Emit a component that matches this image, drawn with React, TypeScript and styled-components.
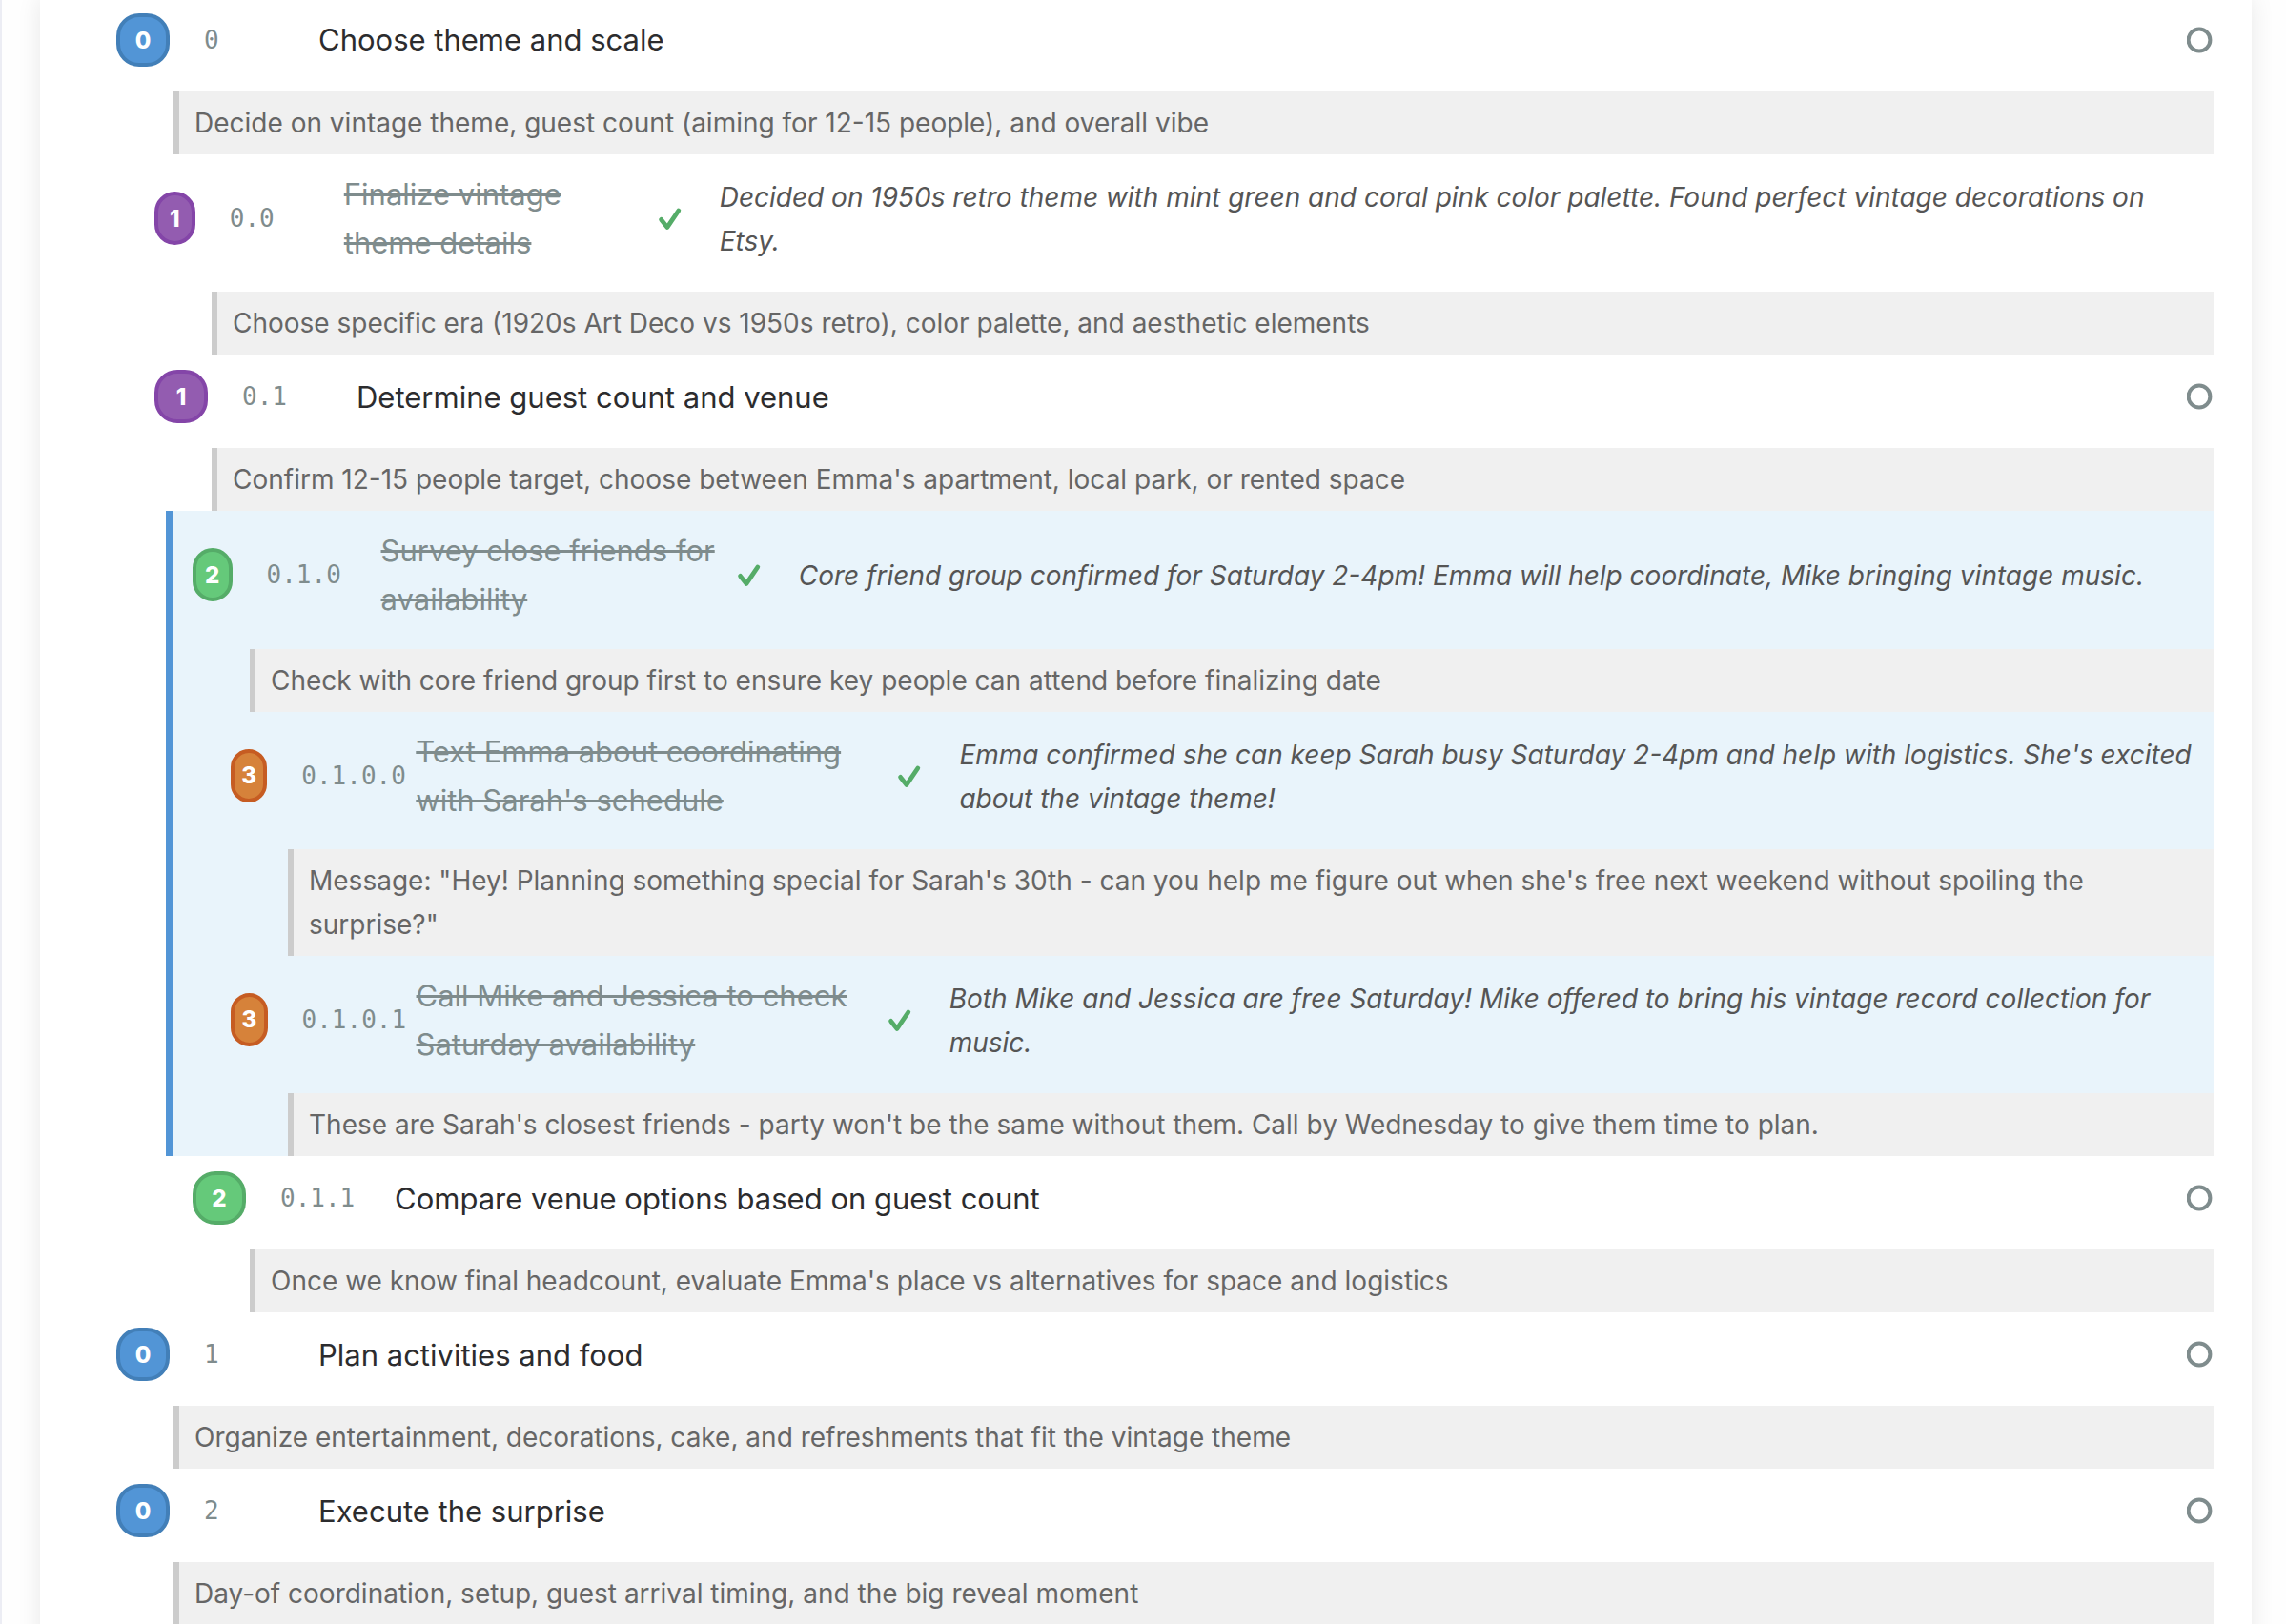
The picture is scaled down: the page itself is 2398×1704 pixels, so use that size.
import React from "react";
import styled, { createGlobalStyle } from "styled-components";

const GlobalStyle = createGlobalStyle`
  *, *::before, *::after { box-sizing: border-box; }
  body {
    margin: 0;
    background: #fefefe;
    font-family: Inter, "Liberation Sans", sans-serif;
    overflow: hidden;
  }
`;

const Page = styled.main`
  height: 100vh;
  overflow: hidden;
  padding: 0 36px 0 40px;
  border-left: 2px solid #ecedf4;
`;

const Card = styled.section`
  min-height: 100%;
  padding: 0 40px 40px;
  background: #fff;
  box-shadow: 0 0 24px rgba(0, 0, 0, 0.09);
`;

const TaskList = styled.ul`
  list-style: none;
  margin: -2px 0 0;
  padding: 0;
`;

const Task = styled.li<{ $level: number; $active?: boolean }>`
  padding-left: ${(p) => 40 + p.$level * 40}px;
  ${(p) =>
    p.$active &&
    `
    margin-left: 92px;
    padding-left: ${p.$level * 40 - 60}px;
    border-left: 8px solid #5295d6;
    background: #e9f4fb;
  `}
`;

const Row = styled.div`
  display: flex;
  align-items: center;
  padding: 16px 0 26px;
`;

const palette = [
  ["#5295d6", "#427fb8"],
  ["#935cb0", "#8445a8"],
  ["#65c97a", "#55ac68"],
  ["#d6823a", "#c65c22"],
];

const Badge = styled.span<{ $level: number }>`
  display: flex;
  flex: 0 1 56px;
  align-items: center;
  justify-content: center;
  height: 56px;
  min-width: 0;
  margin-right: 36px;
  border: 4px solid ${(p) => palette[p.$level][1]};
  border-radius: 24px;
  background: ${(p) => palette[p.$level][0]};
  color: #fff;
  font-size: 24px;
  font-weight: 800;
`;

const Path = styled.span`
  flex: 0 0 120px;
  color: #7f8c8d;
  font-family: "DejaVu Sans Mono", monospace;
  font-size: 26px;
  line-height: 40px;
`;

const Title = styled.span<{ $done?: boolean }>`
  flex: ${(p) => (p.$done ? "0 1 auto" : "1 1 auto")};
  margin-right: 14px;
  color: ${(p) => (p.$done ? "#7f8c8d" : "#2c2c2e")};
  font-size: 31px;
  line-height: 1.65;
  text-decoration: ${(p) => (p.$done ? "line-through" : "none")};
`;

const Icon = styled.svg`
  flex: 0 0 28px;
  width: 28px;
  height: 28px;
  fill: none;
`;

const Result = styled.span`
  flex: 0 1 100%;
  margin-left: 38px;
  padding: 2px 10px 0 0;
  color: #555;
  font-size: 28px;
  font-style: italic;
  line-height: 46px;
`;

const Note = styled.p`
  margin: 0 0 0 60px;
  padding: 10px 16px;
  border-left: 6px solid #ccc;
  background: #f0f0f0;
  color: #666;
  font-size: 28px;
  line-height: 46px;
`;

type TaskData = {
  path: string;
  title: string;
  note: string;
  result?: string;
  active?: boolean;
};

const tasks: TaskData[] = [
  {
    path: "0",
    title: "Choose theme and scale",
    note: "Decide on vintage theme, guest count (aiming for 12-15 people), and overall vibe",
  },
  {
    path: "0.0",
    title: "Finalize vintage theme details",
    result:
      "Decided on 1950s retro theme with mint green and coral pink color palette. Found perfect vintage decorations on Etsy.",
    note: "Choose specific era (1920s Art Deco vs 1950s retro), color palette, and aesthetic elements",
  },
  {
    path: "0.1",
    title: "Determine guest count and venue",
    note: "Confirm 12-15 people target, choose between Emma's apartment, local park, or rented space",
  },
  {
    path: "0.1.0",
    title: "Survey close friends for availability",
    result:
      "Core friend group confirmed for Saturday 2-4pm! Emma will help coordinate, Mike bringing vintage music.",
    note: "Check with core friend group first to ensure key people can attend before finalizing date",
    active: true,
  },
  {
    path: "0.1.0.0",
    title: "Text Emma about coordinating with Sarah's schedule",
    result:
      "Emma confirmed she can keep Sarah busy Saturday 2-4pm and help with logistics. She's excited about the vintage theme!",
    note: "Message: \"Hey! Planning something special for Sarah's 30th - can you help me figure out when she's free next weekend without spoiling the surprise?\"",
    active: true,
  },
  {
    path: "0.1.0.1",
    title: "Call Mike and Jessica to check Saturday availability",
    result:
      "Both Mike and Jessica are free Saturday! Mike offered to bring his vintage record collection for music.",
    note: "These are Sarah's closest friends - party won't be the same without them. Call by Wednesday to give them time to plan.",
    active: true,
  },
  {
    path: "0.1.1",
    title: "Compare venue options based on guest count",
    note: "Once we know final headcount, evaluate Emma's place vs alternatives for space and logistics",
  },
  {
    path: "1",
    title: "Plan activities and food",
    note: "Organize entertainment, decorations, cake, and refreshments that fit the vintage theme",
  },
  {
    path: "2",
    title: "Execute the surprise",
    note: "Day-of coordination, setup, guest arrival timing, and the big reveal moment",
  },
];

function CheckIcon() {
  return (
    <Icon viewBox="0 0 28 28" role="img" aria-label="Done">
      <path
        d="M4.6 15.4 L11 23.4 L22.8 6"
        stroke="#55ac68"
        strokeWidth="4.8"
        strokeLinecap="round"
        strokeLinejoin="round"
      />
    </Icon>
  );
}

function OpenIcon() {
  return (
    <Icon viewBox="0 0 28 28" role="img" aria-label="Open">
      <circle cx="13" cy="14" r="11.4" stroke="#7f8c8d" strokeWidth="4" />
    </Icon>
  );
}

function TaskItem({ task }: { task: TaskData }) {
  const level = task.path.split(".").length - 1;
  const done = Boolean(task.result);
  return (
    <Task $level={level} $active={task.active}>
      <Row>
        <Badge $level={level}>{level}</Badge>
        <Path>{task.path}</Path>
        <Title $done={done}>{task.title}</Title>
        {done ? <CheckIcon /> : <OpenIcon />}
        {done && <Result>{task.result}</Result>}
      </Row>
      <Note>{task.note}</Note>
    </Task>
  );
}

export default function App() {
  return (
    <>
      <GlobalStyle />
      <Page>
        <Card>
          <TaskList>
            {tasks.map((task) => (
              <TaskItem key={task.path} task={task} />
            ))}
          </TaskList>
        </Card>
      </Page>
    </>
  );
}
